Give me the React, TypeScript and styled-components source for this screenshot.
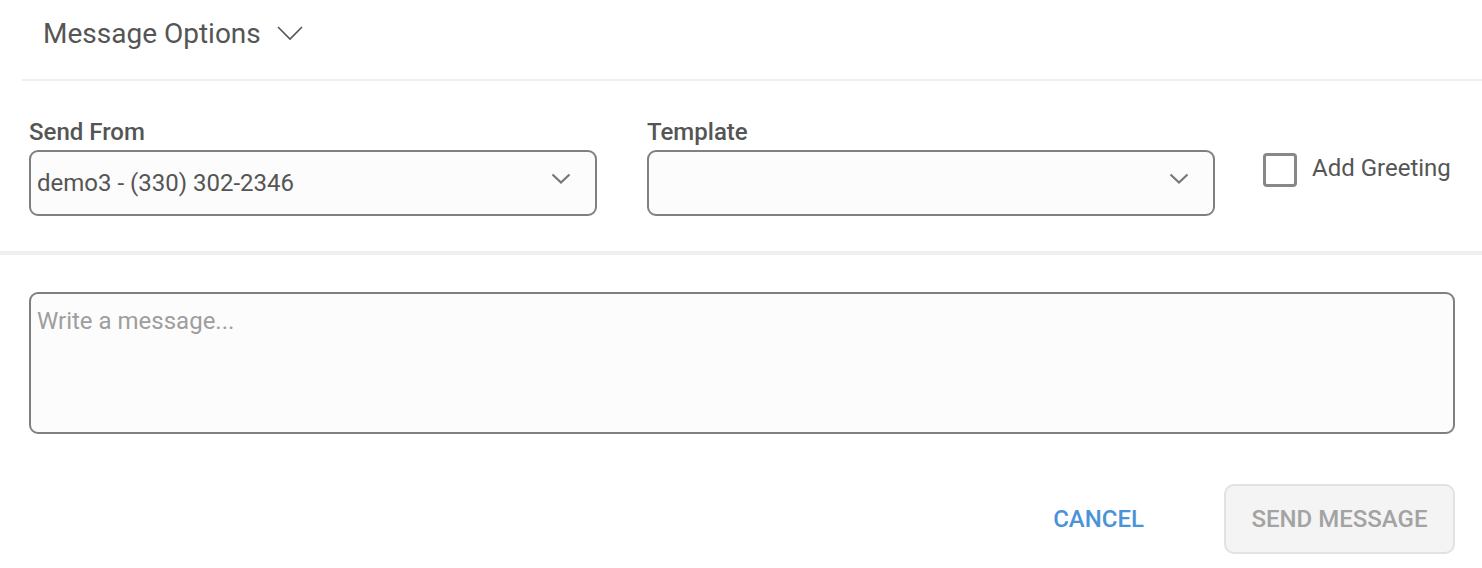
import styled, { createGlobalStyle } from 'styled-components';

const GlobalStyle = createGlobalStyle`
  html, body {
    margin: 0;
    padding: 0;
    background: #ffffff;
  }
  body {
    font-family: Roboto, 'Liberation Sans', Arial, sans-serif;
    color: #555555;
  }
  * {
    box-sizing: border-box;
  }
`;

const Page = styled.div`
  width: 1482px;
  height: 568px;
  overflow: hidden;
`;

const OptionsHeader = styled.div`
  margin-left: 22px;
  height: 81px;
  padding-left: 21px;
  padding-bottom: 2px;
  display: flex;
  align-items: center;
  gap: 16px;
  border-bottom: 2px solid #eef0f0;
`;

const OptionsTitle = styled.span`
  font-size: 28px;
  line-height: 32px;
  color: #555555;
  margin-top: -10px;
`;

const HeaderChevron = styled.svg`
  width: 26px;
  height: 16px;
  margin-top: -12px;
`;

const FormRow = styled.div`
  display: grid;
  grid-template-columns: 568px 568px 1fr;
  column-gap: 50px;
  padding: 37px 0 35px 29px;
  border-bottom: 4px solid #eef0f0;
`;

const Field = styled.div`
  display: flex;
  flex-direction: column;
  gap: 4px;
`;

const Label = styled.label`
  font-size: 24px;
  font-weight: 500;
  line-height: 28px;
  color: #555555;
`;

const SelectBox = styled.div`
  height: 66px;
  border: 2px solid #808080;
  border-radius: 9px;
  background: #fcfcfc;
  display: flex;
  align-items: center;
  justify-content: space-between;
  padding: 0 24px 0 6px;
`;

const SelectValue = styled.span`
  font-size: 24px;
  line-height: 28px;
  color: #555555;
`;

const SelectChevron = styled.svg`
  width: 20px;
  height: 12px;
  margin-top: -8px;
`;

const GreetingOption = styled.label`
  display: flex;
  align-items: center;
  gap: 15px;
  padding-top: 35px;
  margin-left: -2px;
  align-self: start;
`;

const CheckBox = styled.span`
  width: 34px;
  height: 34px;
  border: 3px solid #888888;
  border-radius: 4px;
  background: #ffffff;
`;

const GreetingText = styled.span`
  font-size: 24px;
  line-height: 28px;
  color: #555555;
  margin-top: -4px;
`;

const Composer = styled.div`
  padding: 37px 27px 0 29px;
  display: flex;
  flex-direction: column;
  gap: 50px;
`;

const MessageInput = styled.textarea`
  width: 100%;
  height: 142px;
  resize: none;
  border: 2px solid #808080;
  border-radius: 9px;
  background: #fcfcfc;
  padding: 13px 6px;
  font-family: Roboto, 'Liberation Sans', Arial, sans-serif;
  font-size: 24px;
  line-height: 28px;
  color: #555555;
  outline: none;

  &::placeholder {
    color: #9e9e9e;
  }
`;

const Actions = styled.div`
  display: flex;
  justify-content: flex-end;
  align-items: center;
  gap: 64px;
`;

const TextButton = styled.button`
  background: none;
  border: none;
  padding: 0 16px;
  font-family: Roboto, 'Liberation Sans', Arial, sans-serif;
  font-size: 24px;
  font-weight: 500;
  color: #4a93d8;
  cursor: pointer;
`;

const SendButton = styled.button`
  width: 231px;
  height: 70px;
  border: 2px solid #e2e2e2;
  border-radius: 10px;
  background: #f4f4f4;
  font-family: Roboto, 'Liberation Sans', Arial, sans-serif;
  font-size: 24px;
  font-weight: 500;
  color: #a3a3a3;
`;

function Chevron() {
  return (
    <SelectChevron viewBox="0 0 20 12">
      <polyline points="1.5,1.5 10,9.5 18.5,1.5" fill="none" stroke="#777777" strokeWidth="2.2" />
    </SelectChevron>
  );
}

export default function App() {
  return (
    <>
      <GlobalStyle />
      <Page>
        <OptionsHeader>
          <OptionsTitle>Message Options</OptionsTitle>
          <HeaderChevron viewBox="0 0 26 16">
            <polyline points="1,2 13,14 25,2" fill="none" stroke="#555555" strokeWidth="1.6" />
          </HeaderChevron>
        </OptionsHeader>

        <FormRow>
          <Field>
            <Label>Send From</Label>
            <SelectBox>
              <SelectValue>demo3 - (330) 302-2346</SelectValue>
              <Chevron />
            </SelectBox>
          </Field>
          <Field>
            <Label>Template</Label>
            <SelectBox>
              <SelectValue />
              <Chevron />
            </SelectBox>
          </Field>
          <GreetingOption>
            <CheckBox />
            <GreetingText>Add Greeting</GreetingText>
          </GreetingOption>
        </FormRow>

        <Composer>
          <MessageInput placeholder="Write a message..." />
          <Actions>
            <TextButton>CANCEL</TextButton>
            <SendButton disabled>SEND MESSAGE</SendButton>
          </Actions>
        </Composer>
      </Page>
    </>
  );
}
